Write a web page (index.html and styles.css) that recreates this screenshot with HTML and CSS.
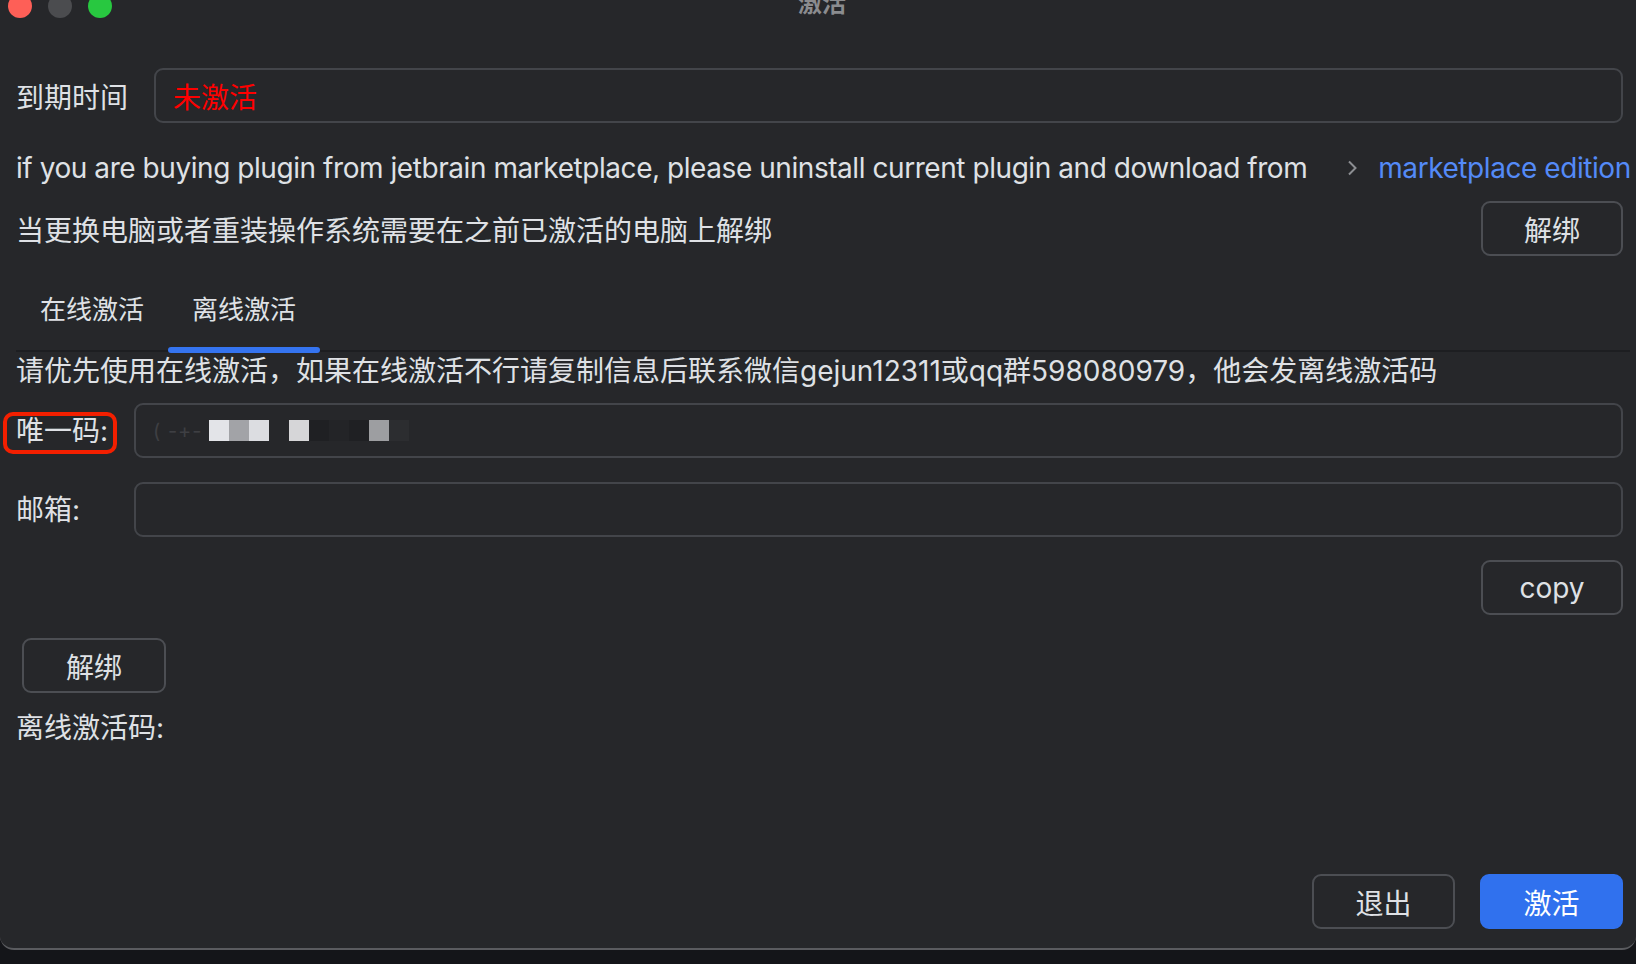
FILE: index.html
```html
<!DOCTYPE html>
<html lang="zh">
<head>
    <meta charset="UTF-8">
    <meta name="viewport" content="width=device-width, initial-scale=1.0">
    <title>激活</title>
    <link rel="stylesheet" href="styles.css">
</head>
<body>
    <div class="window">
        <div class="titlebar">
            <div class="lights">
                <span class="light red"></span>
                <span class="light gray"></span>
                <span class="light green"></span>
            </div>
            <div class="title">激活</div>
        </div>

        <div class="content">
            <div class="expiry-row">
                <span class="label-wide">到期时间</span>
                <div class="field expiry-value">未激活</div>
            </div>

            <div class="market-line">
                <span>if you are buying plugin from jetbrain marketplace, please uninstall current plugin and download from</span>
                <svg class="chevron" width="10" height="16" viewBox="0 0 10 16"><polyline points="2,1.5 8.5,8 2,14.5" fill="none" stroke="#8c8e92" stroke-width="2"/></svg>
                <a class="market-link">marketplace edition</a>
            </div>

            <div class="unbind-row">
                <span>当更换电脑或者重装操作系统需要在之前已激活的电脑上解绑</span>
                <button class="btn">解绑</button>
            </div>

            <div class="tabs">
                <div class="tab">在线激活</div>
                <div class="tab active">离线激活</div>
            </div>

            <p class="hint">请优先使用在线激活，如果在线激活不行请复制信息后联系微信gejun12311或qq群598080979，他会发离线激活码</p>

            <div class="form-row first">
                <span class="form-label"><span class="marked">唯一码:</span></span>
                <div class="field">
                    <div class="redacted">
                        <span class="ghost">( -+-</span>
                        <span class="blk" style="background:#e3e4e8"></span>
                        <span class="blk" style="background:#a2a3a7"></span>
                        <span class="blk" style="background:#dcdde1"></span>
                        <span class="blk ghost-blk"></span>
                        <span class="blk" style="background:#d6d6d8"></span>
                        <span class="blk" style="background:#1f2023"></span>
                        <span class="blk" style="background:#232427"></span>
                        <span class="blk" style="background:#1f2023"></span>
                        <span class="blk" style="background:#9d9ea1"></span>
                        <span class="blk" style="background:#2c2d30"></span>
                    </div>
                </div>
            </div>

            <div class="form-row">
                <span class="form-label">邮箱:</span>
                <div class="field"></div>
            </div>

            <div class="copy-row">
                <button class="btn">copy</button>
            </div>

            <button class="btn unbind-offline">解绑</button>

            <div class="code-label">离线激活码:</div>

            <div class="footer">
                <button class="btn">退出</button>
                <button class="btn primary">激活</button>
            </div>
        </div>
    </div>
</body>
</html>
```

FILE: styles.css
```css
*, *::before, *::after { box-sizing: border-box; }
body {
    margin: 0;
    background: #141519;
    font-family: Inter, "Noto Sans CJK SC", sans-serif;
    font-size: 28px;
    color: #dfe1e5;
}
.window {
    width: 1636px;
    height: 950px;
    background: #26272a;
    border-bottom: 2px solid #5a5b5f;
    border-radius: 0 0 14px 14px;
    overflow: hidden;
    display: flex;
    flex-direction: column;
}
.titlebar {
    height: 24px;
    margin-top: -6px;
    padding-left: 8px;
    display: grid;
    grid-template-columns: 1fr auto 1fr;
    align-items: center;
    flex-shrink: 0;
}
.lights { display: flex; gap: 16px; }
.light { width: 24px; height: 24px; border-radius: 50%; }
.light.red { background: #fe5f57; }
.light.gray { background: #4b4c4f; }
.light.green { background: #28c840; }
.title {
    font-size: 24px;
    font-weight: bold;
    color: #8b8c8f;
    line-height: 24px;
    margin-top: -4px;
}
.content {
    flex: 1;
    display: flex;
    flex-direction: column;
    padding: 0 13px 19px 16px;
}
.expiry-row { display: flex; align-items: center; margin-top: 50px; }
.label-wide { width: 138px; flex-shrink: 0; }
.field {
    flex: 1;
    height: 55px;
    border: 2px solid #43454a;
    border-radius: 9px;
    display: flex;
    align-items: center;
    padding: 0 17px;
}
.expiry-value { color: #ff0000; }
.market-line {
    display: flex;
    align-items: center;
    white-space: nowrap;
    line-height: 40px;
    margin-top: 25px;
    letter-spacing: -0.44px;
}
.chevron { margin: 0 21px 0 40px; flex-shrink: 0; }
.market-link { color: #548af7; }
.unbind-row {
    display: flex;
    justify-content: space-between;
    align-items: center;
    margin-top: 13px;
}
.btn {
    font: inherit;
    color: #dfe1e5;
    background: transparent;
    border: 2px solid #4c4e53;
    border-radius: 9px;
    width: 142px;
    height: 55px;
    padding: 0;
    cursor: pointer;
}
.btn.primary {
    background: #3071ee;
    border-color: #3071ee;
    color: #ffffff;
}
.tabs {
    display: flex;
    margin-top: 34px;
    margin-right: -7px;
    border-bottom: 2px solid #1d1e21;
}
.tab {
    position: relative;
    padding: 0 24px 20px;
    line-height: 40px;
    font-size: 26px;
}
.tab.active::after {
    content: "";
    position: absolute;
    left: 0;
    right: 0;
    bottom: -3px;
    height: 6px;
    border-radius: 3px;
    background: #3574f0;
}
.hint { margin: 0; line-height: 38px; }
.form-row { display: flex; align-items: center; margin-top: 24px; }
.form-row.first { margin-top: 13px; }
.form-label { width: 118px; flex-shrink: 0; line-height: 40px; }
.marked { position: relative; display: inline-block; }
.marked::before {
    content: "";
    position: absolute;
    left: -13px;
    top: 1px;
    width: 114px;
    height: 42px;
    border: 4px solid #f31f00;
    border-radius: 10px;
}
.redacted { display: flex; align-items: center; height: 22px; }
.ghost {
    width: 56px;
    font-size: 20px;
    color: #3e3f43;
    letter-spacing: 1px;
    white-space: nowrap;
}
.blk { width: 20px; height: 21px; }
.ghost-blk { background: transparent; }
.copy-row { display: flex; justify-content: flex-end; margin-top: 23px; }
.unbind-offline { margin-top: 23px; margin-left: 6px; width: 144px; }
.code-label { line-height: 40px; margin-top: 15px; }
.footer {
    margin-top: auto;
    display: flex;
    justify-content: flex-end;
    gap: 25px;
}
.footer .btn { width: 143px; }
```
